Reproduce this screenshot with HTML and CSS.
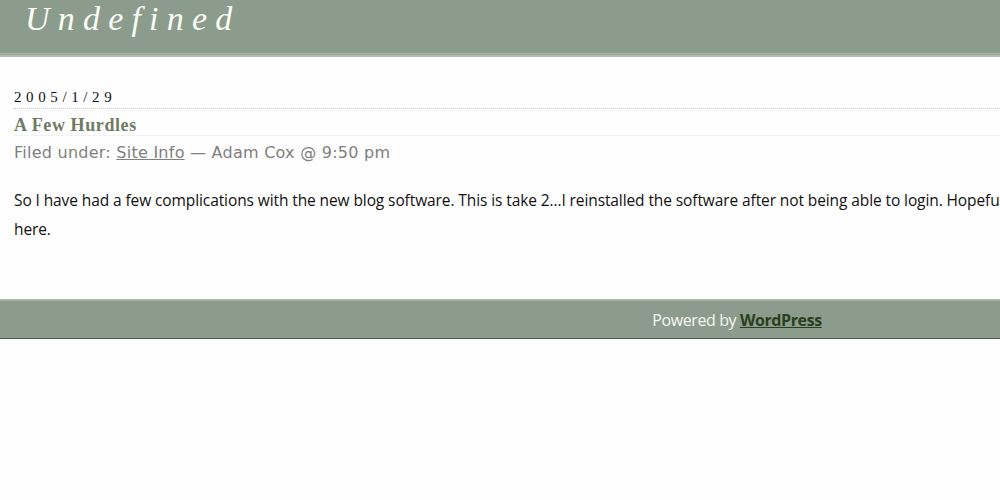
FILE: index.html
```html
<!DOCTYPE html>
<html>
<head>
<meta charset="utf-8">
<title>Undefined</title>
<link rel="stylesheet" href="styles.css">
</head>
<body>
<div class="page">
  <header class="masthead">
    <h1 class="site-title">Undefined</h1>
  </header>
  <main class="content">
    <h2 class="date">2005/1/29</h2>
    <article class="post">
      <h3 class="post-title">A Few Hurdles</h3>
      <div class="meta">Filed under: <a href="#" class="meta-link">Site Info</a> — Adam Cox @ 9:50 pm</div>
      <div class="entry">
        <p>So I have had a few complications with the new blog software. This is take 2…I reinstalled the software after not being able to login. Hopefully everything will be fine from here.</p>
      </div>
    </article>
  </main>
  <footer class="footer">
    <p class="credit">Powered by <a href="#" class="wp-link">WordPress</a></p>
  </footer>
</div>
</body>
</html>
```

FILE: styles.css
```css
html, body {
  margin: 0;
  padding: 0;
  background: #fefefe;
  overflow: hidden;
}
.page {
  width: 1474px;
}
.masthead {
  background: #8c9c8c;
  height: 53px;
  border-bottom: 1px solid #a9b5a9;
  box-shadow: 0 1px 0 #98a698, 0 3px 0 #b4bcb4;
}
.site-title {
  margin: 0;
  padding: 0 0 0 25px;
  font-family: "Liberation Serif", "DejaVu Serif", serif;
  font-style: italic;
  font-weight: normal;
  font-size: 34px;
  line-height: 38px;
  letter-spacing: 8.2px;
  color: #fbfcf8;
}
.content {
  padding: 32px 0 0 14px;
  height: 213px;
}
.date {
  margin: 0;
  font-family: "Liberation Serif", serif;
  font-weight: normal;
  font-size: 15px;
  line-height: 22px;
  letter-spacing: 4.6px;
  color: #111;
  border-bottom: 1px dotted #c8c8c8;
}
.post-title {
  margin: 0;
  padding-top: 6px;
  font-family: "Liberation Serif", serif;
  font-weight: bold;
  font-size: 18px;
  line-height: 20px;
  letter-spacing: 0.6px;
  color: #6f7b62;
  border-bottom: 1px solid #f2f2f2;
}
.meta {
  margin-top: 6px;
  font-family: "DejaVu Sans", sans-serif;
  font-size: 16px;
  line-height: 22px;
  color: #808080;
  letter-spacing: 0.25px;
}
.meta-link {
  color: #808080;
}
.entry p {
  margin: 22px 0 0;
  font-family: "Open Sans", sans-serif;
  font-size: 15.5px;
  line-height: 29px;
  color: #111;
  letter-spacing: -0.1px;
  width: 1218px;
}
.footer {
  border-top: 2px solid #a7b3a5;
  background: #8c9c8c;
  border-bottom: 1px solid #4e5e4e;
  height: 37px;
  display: flex;
  align-items: center;
  justify-content: center;
}
.credit {
  margin: 0;
  font-family: "Open Sans", sans-serif;
  font-size: 16px;
  color: #f6f8f2;
  letter-spacing: -0.4px;
}
.wp-link {
  color: #284020;
  font-weight: bold;
}
```
